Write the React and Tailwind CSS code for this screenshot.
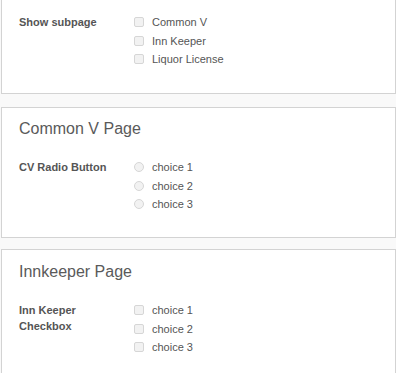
const font = "font-['Liberation_Sans',Arial,sans-serif]";

function Box({ type }) {
    if (type === 'radio') {
        return <span className="w-[10px] h-[10px] rounded-full border border-[#d6d6d6] bg-[#f2f2f2] shrink-0 mr-[8px]" />;
    }
    return <span className="w-[10px] h-[10px] rounded-[2px] border border-[#d6d6d6] bg-[#f2f2f2] shrink-0 mr-[8px]" />;
}

function Field({ label, type, options }) {
    return (
        <div className="flex">
            <div className="w-[100px] shrink-0 mt-[1px] text-[11px] leading-[16px] font-bold text-[#555]">{label}</div>
            <div className="ml-[15px] flex flex-col">
                {options.map((opt) => (
                    <div key={opt} className="flex items-center h-[18.5px] text-[11px] text-[#555]">
                        <Box type={type} />
                        <span>{opt}</span>
                    </div>
                ))}
            </div>
        </div>
    );
}

function Panel({ title, className, children }) {
    return (
        <div className={`ml-px bg-white border border-[#d3d3d3] pl-[17px] ${className}`}>
            {title && <h3 className="text-[16px] leading-[22px] text-[#5a5a5a] mb-[18.5px]">{title}</h3>}
            {children}
        </div>
    );
}

export default function App() {
    const choices = ['choice 1', 'choice 2', 'choice 3'];
    return (
        <div className={`${font} bg-[#f9f9f9] min-h-[373px] w-[396px] overflow-hidden`}>
            <Panel className="border-t-0 pt-[13px] pb-[24px]">
                <Field label="Show subpage" type="checkbox" options={['Common V', 'Inn Keeper', 'Liquor License']} />
            </Panel>
            <Panel title="Common V Page" className="mt-[13px] pt-[10px] pb-[23px]">
                <Field label="CV Radio Button" type="radio" options={choices} />
            </Panel>
            <Panel title="Innkeeper Page" className="mt-[11px] pt-[11px] pb-[30px]">
                <Field label="Inn Keeper Checkbox" type="checkbox" options={choices} />
            </Panel>
        </div>
    );
}
